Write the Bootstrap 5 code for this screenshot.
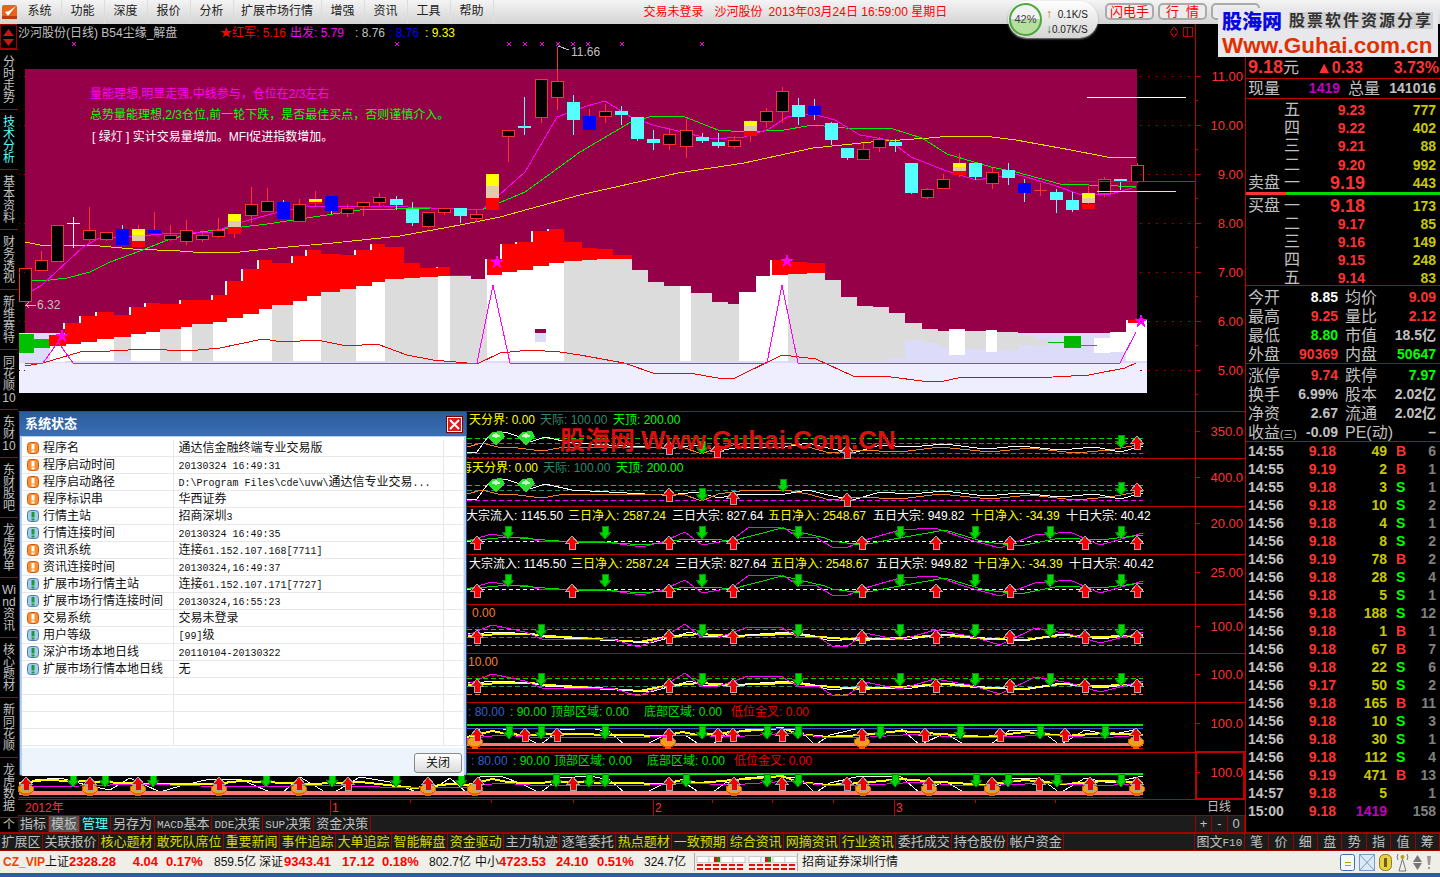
<!DOCTYPE html>
<html lang="zh-CN">
<head>
  <meta charset="UTF-8">
  <meta name="viewport" content="width=device-width, initial-scale=1">
  <title>招商证券深圳行情</title>
  <link href="https://cdn.jsdelivr.net/npm/bootstrap@5.3.0/dist/css/bootstrap.min.css" rel="stylesheet">
  <style>
    html, body { margin: 0; height: 877px; overflow: hidden; background: #000; }
    body { font: 12px/1.2 "Liberation Sans", "Noto Sans CJK SC", sans-serif; color: #c0c0c0; }
    .app { position: relative; width: 1440px; height: 877px; }

    /* top menu */
    .top-bar { height: 24px; background: linear-gradient(#f4f4f4, #d4d4d4); color: #222; }
    .top-logo { width: 18.5px; padding-left: 2px; }
    .menu-item { width: 43px; text-align: center; line-height: 23px; border-right: 1px solid #ddd; }
    .menu-long { width: 88px; }
    .top-status { margin-left: 150px; color: #f00; white-space: nowrap; }
    .top-status span { margin-right: 11px; }
    .top-status span + span { margin-right: 6px; }
    .top-btns { margin-left: auto; width: 335px; padding-top: 3px; }
    .top-btn { height: 17px; width: 49px; padding: 0; font-size: 13px; line-height: 13px; color: #f00; background: #ececec; border: 2px solid #aaa; border-radius: 5px; white-space: pre; }
    .top-btn:hover { color: #f00; background: #ececec; border-color: #aaa; }
    .speed-pill { position: absolute; left: 1008px; top: 1px; width: 90px; height: 37px; border-radius: 19px; background: linear-gradient(#fff, #d4d4d4); z-index: 5; box-shadow: 0 1px 2px #888; color: #222; font-size: 10px; }
    .speed-ring { position: absolute; left: 1px; top: 2px; width: 33px; height: 33px; border-radius: 50%; border: 2px solid #4da83a; background: linear-gradient(#f2f2f2 50%, #b6de9c 50%); text-align: center; line-height: 29px; color: #444; font-size: 11px; }
    .speed-up, .speed-down { position: absolute; left: 38px; white-space: nowrap; }
    .speed-up { top: 6px; }
    .speed-down { top: 21px; }
    .arrow-up { color: #e06000; font-weight: bold; font-size: 12px; margin-right: 3px; }
    .arrow-down { color: #087808; font-weight: bold; font-size: 12px; margin-right: 0; }
    .ad-banner { position: absolute; left: 1218px; top: 8px; width: 220px; height: 49px; background: #e8e8ec; z-index: 6; padding: 2px 4px 0; }
    .ad-name { font-size: 20px; line-height: 24px; font-weight: 900; color: #0808e0; width: 67px; }
    .ad-slogan { font-size: 16px; line-height: 17px; height: 17px; margin-top: 2px; letter-spacing: 2px; font-weight: 700; background: #d2d2d2; color: #333; white-space: nowrap; }
    .ad-url { font-size: 22.5px; line-height: 23px; font-weight: 700; color: #e03000; white-space: nowrap; }

    /* main frame */
    .mid-row { height: 808px; }
    .side-col { width: 18px; overflow: hidden; background: #000; text-align: center; font-size: 12px; line-height: 12px; }
    .side-step { height: 26px; border: 1px solid #a00000; padding: 2px 0 0; margin-right: 1px; }
    .side-tab { border-top: 1px solid #b00000; padding-top: 6px; color: #c0c0c0; flex: none; }
    .side-tab:last-child { padding-top: 1px; }
    .side-on { color: #54ffff; }
    .chart-col { width: 1227px; }
    .chart-cv { display: block; shape-rendering: crispEdges; }
    .chart-cv text { font-size: 12px; }
    .chart-cv .ax { font-size: 13px; fill: #ff3232; text-anchor: end; }
    .chart-cv .mark { font-size: 26px; font-weight: 700; fill: #dc1010; }
    .dark-tabs { height: 17px; background: #1c1c1c; border-top: 1px solid #a00000; font-size: 13px; line-height: 15px; }
    .dark-item { border-right: 1px solid #a00000; padding: 0 2px; color: #c0c0c0; white-space: nowrap; }
    .dark-active { background: #555; }
    .dark-cyan { color: #54ffff; }
    .latin-narrow { font: 11px "Liberation Mono", monospace; }
    .plus-box { margin-left: auto; width: 50px; height: 16px; display: grid; grid-template-columns: 16px 16px 1fr; text-align: center; border-left: 1px solid #a00000; }
    .plus-box > div { border-right: 1px solid #a00000; }

    /* quote column */
    .quote-col { width: 195px; border-left: 1px solid #c00000; background: #000; font-weight: 700; font-size: 14px; }
    .q-top { height: 33px; flex: none; }
    .q-price { height: 22px; display: grid; grid-template-columns: 68px 1fr auto; padding: 0 1px 0 2px; color: #ff3232; border-bottom: 1px solid #c00000; font-size: 16px; line-height: 21px; }
    .q-big { font-size: 18px; }
    .q-cjk { font-weight: 400; font-size: 16px; color: #c0c0c0; }
    .q-paren { font-size: 10px; }
    .q-vol { height: 20px; display: grid; grid-template-columns: 34px 58px 8px 34px 1fr; padding: 0 4px 0 2px; border-bottom: 1px solid #c00000; line-height: 19px; }
    .q-book { padding: 2px 4px 0 2px; }
    .q-line { display: grid; grid-template-columns: 36px 16px 65px 1fr; height: 18.2px; line-height: 18px; }
    .q-buy .q-line { height: 18px; }
    .q-qty { text-align: right; color: #c8c800; }
    .q-px { text-align: right; color: #ff3232; }
    .q-px-big { font-size: 18px; }
    .q-bar { height: 3px; background: #00dc00; flex: none; }
    .q-bar-fill { height: 3px; background: #ff3232; }
    .q-buy { height: 91px; border-bottom: 1px solid #c00000; flex: none; }
    .q-stats { padding: 2px 4px 0 2px; border-bottom: 1px solid #c00000; height: 78px; flex: none; }
    .q-stat { display: grid; grid-template-columns: 34px 56px 41px 1fr; height: 19px; line-height: 19px; white-space: nowrap; }
    .q-stat > :nth-child(3) { padding-left: 7px; }
    .q-val { text-align: right; }
    .c-red { color: #ff3232; }
    .c-white { color: #fff; }
    .c-green { color: #00ff00; }
    .c-silver { color: #c0c0c0; }
    .c-purple { color: #c000c0; }
    .c-count { color: #808080; }
    .q-ticks { padding: 1px 4px 0 2px; }
    .q-tick { display: grid; grid-template-columns: 40px 48px 51px 20px 1fr; height: 18px; line-height: 17px; }
    .q-side { padding-left: 9px; }

    /* second tab row */
    .tab-row { height: 19px; background: #1c1c1c; border-top: 2px solid #a00000; font-size: 13px; line-height: 16px; border-bottom: 1px solid #a00000; }
    .tab-item { border-right: 1px solid #a00000; padding: 0 1.5px; white-space: nowrap; color: #c0c0c0; }
    .tab-yel { color: #d8d800; }
    .tab-f10 { margin-left: auto; width: 51px; border-left: 1px solid #a00000; text-align: center; }
    .tab-pick { width: 24.4px; text-align: center; padding: 0; }

    /* status */
    .status-bar { height: 22px; background: #efefe8; display: grid; grid-template-columns: 42px 24px 61px 36px 48px 45px 25px 58px 40px 47px 46px 24px 57px 41px 47px 50px 108px 1fr auto; align-items: center; padding-left: 3px; color: #111; font-size: 12px; white-space: nowrap; }
    .st-b { font-weight: 700; color: #f00; font-size: 13px; }
    .st-vip { font-weight: 700; color: #f04000; font-size: 12px; }
    .st-mini { height: 18px; border-left: 1px solid #aaa; border-right: 1px solid #aaa; width: 104px; }
    .st-icons { padding-right: 8px; }
    .st-icons svg { display: block; }
    .task-edge { height: 4px; background: #2d5d9e; }

    /* dialog */
    .dlg-box { position: absolute; left: 19px; top: 411px; width: 448px; height: 365px; background: #b5d0ee; border: 1px solid #1f4f90; border-radius: 2px; z-index: 4; color: #111; }
    .dlg-head { height: 24px; padding: 0 3px 0 5px; background: linear-gradient(#2a5b9c, #3b70b5); border: 0; border-radius: 0; color: #fff; font-weight: 700; font-size: 13px; line-height: 24px; }
    .dlg-x { width: 17px; height: 17px; background: #e01818; border: 1px solid #7a0000; outline: 1px solid #fff; outline-offset: -2px; display: flex; align-items: center; justify-content: center; margin-top: 4px; }
    .dlg-body { margin: 1px 2px 0; height: 311px; background: #fff; padding: 3px 0 0; overflow: hidden; }
    .dlg-table { table-layout: fixed; width: 442px; margin: 0; font-size: 12px; }
    .dlg-table > tbody > tr > td { padding: 0 0 0 5px; border-bottom: 1px solid #e8e8e8; border-right: 1px solid #e8e8e8; color: #111; }
    .dlg-cell { display: block; height: 16px; line-height: 16px; white-space: nowrap; overflow: hidden; }
    .dlg-ico { vertical-align: -2px; margin-right: 4px; }
    .dlg-mono { font: 10px/16px "Liberation Mono", monospace; }
    .dlg-foot { height: 28px; padding: 5px 2px 0 0; background: #eef4fb; margin: 0 2px; text-align: right; }
    .dlg-close { width: 48px; height: 20px; padding: 0; font-size: 12px; line-height: 16px; color: #111; background: linear-gradient(#fff, #dcdcdc); border: 1px solid #888; border-radius: 3px; }
  </style>
</head>
<body>
<div class="app">

  <div class="top-bar d-flex">
    <div class="top-logo pt-1">
      <svg width="16" height="16" viewBox="0 0 16 16"><rect x="0" y="1" width="15" height="14" rx="2" fill="#e8641a"/><path d="M3 8l3 4 8-10-7 5z" fill="#fff"/><path d="M0 12h15v3H0z" fill="#b83c0c"/></svg>
    </div>
    <div class="menu-item">系统</div>
    <div class="menu-item">功能</div>
    <div class="menu-item">深度</div>
    <div class="menu-item">报价</div>
    <div class="menu-item">分析</div>
    <div class="menu-item menu-long">扩展市场行情</div>
    <div class="menu-item">增强</div>
    <div class="menu-item">资讯</div>
    <div class="menu-item">工具</div>
    <div class="menu-item">帮助</div>
    <div class="top-status lh-lg"><span>交易未登录</span><span>沙河股份</span><span>2013年03月24日 16:59:00 星期日</span></div>
    <div class="top-btns d-flex gap-1">
      <button class="btn top-btn">闪电手</button>
      <button class="btn top-btn">行  情</button>
      <button class="btn top-btn"></button>
    </div>
  </div>

  <div class="speed-pill">
    <div class="speed-ring">42%</div>
    <div class="speed-up"><span class="arrow-up">↑</span>&nbsp;0.1K/S</div>
    <div class="speed-down"><span class="arrow-down">↓</span>0.07K/S</div>
  </div>

  <div class="ad-banner">
    <div class="d-flex">
      <div class="ad-name">股海网</div>
      <div class="ad-slogan">股票软件资源分享</div>
    </div>
    <div class="ad-url">Www.Guhai.com.cn</div>
  </div>

  <div class="mid-row d-flex">
    <div class="side-col d-flex flex-column" id="sideCol">
      <div class="side-step">
        <svg width="15" height="21" viewBox="0 0 15 21"><path d="M7.5 2L13 9H2z" fill="#c01818"/><path d="M2 12h11l-5.5 7z" fill="#c01818"/></svg>
      </div>
    </div>
    <div class="chart-col d-flex flex-column">
      <svg class="chart-cv" id="chart" width="1227" height="791" viewBox="18 24 1227 791"></svg>
      <div class="dark-tabs d-flex">
        <div class="dark-item">指标</div>
        <div class="dark-item dark-active">模板</div>
        <div class="dark-item dark-cyan">管理</div>
        <div class="dark-item">另存为</div>
        <div class="dark-item"><span class="latin-narrow">MACD</span>基本</div>
        <div class="dark-item"><span class="latin-narrow">DDE</span>决策</div>
        <div class="dark-item"><span class="latin-narrow">SUP</span>决策</div>
        <div class="dark-item">资金决策</div>
        <div class="plus-box"><div>+</div><div>-</div><div>0</div></div>
      </div>
    </div>
    <div class="quote-col d-flex flex-column">
      <div class="q-top"></div>
      <div class="q-price"><div><span class="q-big">9.18</span><span class="q-cjk">元</span></div><div>▲0.33</div><div>3.73%</div></div>
      <div class="q-vol"><span class="q-cjk">现量</span><span class="q-val c-purple">1419</span><span></span><span class="q-cjk">总量</span><span class="q-val c-silver">141016</span></div>
      <div class="q-book" id="bookSell"></div>
      <div class="q-bar"><div class="q-bar-fill" id="bookBar"></div></div>
      <div class="q-book q-buy" id="bookBuy"></div>
      <div class="q-stats" id="stats1"></div>
      <div class="q-stats" id="stats2"></div>
      <div class="q-ticks" id="ticks"></div>
    </div>
  </div>

  <div class="tab-row d-flex" id="tabRow"></div>

  <div class="status-bar">
    <span class="st-vip">CZ_VIP</span><span>上证</span><span class="st-b">2328.28</span><span class="st-b text-end pe-2">4.04</span><span class="st-b">0.17%</span><span>859.5亿</span>
    <span>深证</span><span class="st-b">9343.41</span><span class="st-b">17.12</span><span class="st-b">0.18%</span><span>802.7亿</span>
    <span>中小</span><span class="st-b">4723.53</span><span class="st-b">24.10</span><span class="st-b">0.51%</span><span>324.7亿</span>
    <div class="st-mini" id="stMini"></div>
    <span>招商证券深圳行情</span>
    <div class="st-icons d-flex gap-1 align-items-center">
      <svg width="15" height="17" viewBox="0 0 15 17"><rect x="0.5" y="0.5" width="14" height="16" rx="2" fill="#f4f8ff" stroke="#3b6fb5"/><rect x="5" y="8" width="6" height="1" fill="#c8a000"/><rect x="5" y="11" width="6" height="1" fill="#c8a000"/></svg>
      <svg width="16" height="17" viewBox="0 0 16 17"><rect x="0.5" y="0.5" width="15" height="16" fill="#dbe9f8" stroke="#7a9cc8"/><path d="M1 1l14 15M15 1L1 16" stroke="#7a9cc8" fill="none"/></svg>
      <svg width="13" height="17" viewBox="0 0 13 17"><rect x="0.5" y="0.5" width="12" height="16" rx="5" fill="#e8d040" stroke="#8a7a20"/><rect x="5" y="4" width="3" height="9" fill="#6a6020"/></svg>
      <svg width="13" height="19" viewBox="0 0 13 19"><path d="M6.5 6L3 18h7z" fill="none" stroke="#777"/><circle cx="6.5" cy="4" r="2" fill="#b8a020"/><path d="M2 1a6 6 0 0 0 0 6M11 1a6 6 0 0 1 0 6" fill="none" stroke="#777"/></svg>
      <svg width="9" height="17" viewBox="0 0 9 17"><path d="M4.5 1L9 8H0zM4.5 16L0 9h9z" fill="#777"/></svg>
      <svg width="6" height="15" viewBox="0 0 6 15"><path d="M1 1h4L4 10H2zM2 12h2v2H2z" fill="#999"/></svg>
    </div>
  </div>
  <div class="task-edge"></div>

  <div class="dlg-box">
    <div class="dlg-head card-header d-flex justify-content-between">
      <span>系统状态</span>
      <span class="dlg-x"><svg width="11" height="11" viewBox="0 0 11 11"><path d="M1 1l9 9M10 1l-9 9" stroke="#fff" stroke-width="2" fill="none"/></svg></span>
    </div>
    <div class="dlg-body">
      <table class="table dlg-table">
        <colgroup><col style="width:151px"><col style="width:270px"><col></colgroup>
        <tbody id="dlgRows"></tbody>
      </table>
    </div>
    <div class="dlg-foot"><button class="btn dlg-close">关闭</button></div>
  </div>
</div>

<svg width="0" height="0" class="position-absolute">
  <symbol id="icoWarn" viewBox="0 0 12 12"><rect x="0.5" y="0.5" width="11" height="11" rx="3" fill="#f89030" stroke="#d85810"/><rect x="4.5" y="2" width="3" height="5.5" fill="#fff"/><rect x="4.5" y="8.5" width="3" height="2" fill="#fff"/></symbol>
  <symbol id="icoInfo" viewBox="0 0 12 12"><rect x="0.5" y="0.5" width="11" height="11" rx="3" fill="#a8cce8" stroke="#4878c0"/><rect x="4.5" y="2" width="3" height="5.5" fill="#189838"/><rect x="4.5" y="8.5" width="3" height="2" fill="#189838"/></symbol>
</svg>

<script src="https://cdn.jsdelivr.net/npm/bootstrap@5.3.0/dist/js/bootstrap.bundle.min.js"></script>
<script>
  // left tabs
  const sideTabs = ['分 时 走 势', '技 术 分 析', '基 本 资 料', '财 务 透 视', '新 维 赛 特', '同 花 顺 10', '东 财 10', '东 财 股 吧', '龙 虎 榜 单', 'Wi nd 资 讯', '核 心 题 材', '新 同 花 顺', '龙 虎 数 据', '个'];
  const sideCol = document.getElementById('sideCol');
  sideTabs.forEach((t, i) => {
    const el = document.createElement('div');
    el.className = 'side-tab' + (i === 1 ? ' side-on' : '');
    el.innerHTML = t.split(' ').join('<br>');
    sideCol.appendChild(el);
  });
  sideCol.querySelectorAll('.side-tab').forEach((el, i) => { el.style.height = (sideTabs[i].split(' ').length * 12 + 12) + 'px'; });

  // quote column
  const bookRow = (lab, num, px, qty, big) => `<div class="q-line"><span class="q-cjk">${lab}</span><span class="q-cjk">${num}</span><span class="q-px ${big ? 'q-px-big' : ''}">${px}</span><span class="q-qty">${qty}</span></div>`;
  document.getElementById('bookSell').innerHTML = [['', '五', '9.23', 777], ['', '四', '9.22', 402], ['', '三', '9.21', 88], ['', '二', '9.20', 992], ['卖盘', '一', '9.19', 443, 1]].map(r => bookRow(...r)).join('');
  document.getElementById('bookBuy').innerHTML = [['买盘', '一', '9.18', 173, 1], ['', '二', '9.17', 85], ['', '三', '9.16', 149], ['', '四', '9.15', 248], ['', '五', '9.14', 83]].map(r => bookRow(...r)).join('');
  document.getElementById('bookBar').style.width = '40px';

  const statRow = (a, av, ac, b, bv, bc) => `<div class="q-stat"><span class="q-cjk">${a}</span><span class="q-val ${ac}">${av}</span><span class="q-cjk">${b}</span><span class="q-val ${bc}">${bv}</span></div>`;
  document.getElementById('stats1').innerHTML = [
    ['今开', '8.85', 'c-white', '均价', '9.09', 'c-red'], ['最高', '9.25', 'c-red', '量比', '2.12', 'c-red'],
    ['最低', '8.80', 'c-green', '市值', '18.5亿', 'c-silver'], ['外盘', '90369', 'c-red', '内盘', '50647', 'c-green']
  ].map(r => statRow(...r)).join('');
  document.getElementById('stats2').innerHTML = [
    ['涨停', '9.74', 'c-red', '跌停', '7.97', 'c-green'], ['换手', '6.99%', 'c-silver', '股本', '2.02亿', 'c-silver'],
    ['净资', '2.67', 'c-silver', '流通', '2.02亿', 'c-silver'], ['收益<span class="q-paren">(三)</span>', '-0.09', 'c-silver', 'PE(动)', '–', 'c-silver']
  ].map(r => statRow(...r)).join('');

  const ticks = [['14:55', '9.18', 49, 'B', 6], ['14:55', '9.19', 2, 'B', 1], ['14:55', '9.18', 3, 'S', 1], ['14:56', '9.18', 10, 'S', 2], ['14:56', '9.18', 4, 'S', 1], ['14:56', '9.18', 8, 'S', 2], ['14:56', '9.19', 78, 'B', 2], ['14:56', '9.18', 28, 'S', 4], ['14:56', '9.18', 5, 'S', 1], ['14:56', '9.18', 188, 'S', 12], ['14:56', '9.18', 1, 'B', 1], ['14:56', '9.18', 67, 'B', 7], ['14:56', '9.18', 22, 'S', 6], ['14:56', '9.17', 50, 'S', 2], ['14:56', '9.18', 165, 'B', 11], ['14:56', '9.18', 10, 'S', 3], ['14:56', '9.18', 30, 'S', 1], ['14:56', '9.18', 112, 'S', 4], ['14:56', '9.19', 471, 'B', 13], ['14:57', '9.18', 5, '', 1], ['15:00', '9.18', 1419, '', 158]];
  document.getElementById('ticks').innerHTML = ticks.map(t => `<div class="q-tick"><span class="c-silver">${t[0]}</span><span class="q-px">${t[1]}</span><span class="q-qty ${t[2] === 1419 ? 'c-purple' : ''}">${t[2]}</span><span class="q-side ${t[3] === 'B' ? 'c-red' : 'c-green'}">${t[3]}</span><span class="q-val c-count">${t[4]}</span></div>`).join('');

  // lower tab row
  const tabRow = document.getElementById('tabRow');
  const lowerTabs = [['扩展区'], ['关联报价'], ['核心题材', 1], ['敢死队席位', 1], ['重要新闻', 1], ['事件追踪', 1], ['大单追踪', 1], ['智能解盘', 1], ['资金驱动', 1], ['主力轨迹'], ['逐笔委托'], ['热点题材', 1], ['一致预期', 1], ['综合资讯', 1], ['网摘资讯', 1], ['行业资讯', 1], ['委托成交'], ['持仓股份'], ['帐户资金']];
  tabRow.innerHTML = lowerTabs.map(t => `<div class="tab-item ${t[1] ? 'tab-yel' : ''}">${t[0]}</div>`).join('')
    + '<div class="tab-item tab-f10">图文<span class="latin-narrow">F10</span></div>'
    + ['笔', '价', '细', '盘', '势', '指', '值', '筹'].map((t, i) => `<div class="tab-item tab-pick ${i === 0 ? 'dark-cyan' : ''}">${t}</div>`).join('');

  // status mini bars
  let mini = '<svg width="104" height="18" viewBox="0 0 104 18">';
  [2, 54].forEach(x0 => {
    for (let i = 0; i < 4; i++) mini += `<rect x="${x0 + i * 12}" y="3.5" width="12" height="6" fill="#fff" stroke="#ccc"/>`;
    for (let i = 0; i < 6; i++) {
      mini += `<rect x="${x0 + i * 8}" y="11" width="6" height="2" fill="#e01010"/><rect x="${x0 + i * 8}" y="15" width="6" height="2" fill="#e01010"/>`;
    }
  });
  mini += '<rect x="19" y="4" width="3" height="5" fill="#e01010"/><rect x="22" y="4" width="3" height="5" fill="#109010"/><rect x="70" y="4" width="3" height="5" fill="#e01010"/><rect x="73" y="4" width="3" height="5" fill="#109010"/></svg>';
  document.getElementById('stMini').innerHTML = mini;

  // dialog rows
  const m = s => `<span class="dlg-mono">${s}</span>`;
  const dlgRows = [
    ['w', '程序名', '通达信金融终端专业交易版'],
    ['w', '程序启动时间', m('20130324 16:49:31')],
    ['w', '程序启动路径', m('D:\\Program Files\\cde\\uvw\\') + '通达信专业交易' + m('...')],
    ['w', '程序标识串', '华西证券'],
    ['i', '行情主站', '招商深圳' + m('3')],
    ['i', '行情连接时间', m('20130324 16:49:35')],
    ['w', '资讯系统', '连接' + m('61.152.107.168[7711]')],
    ['w', '资讯连接时间', m('20130324,16:49:37')],
    ['i', '扩展市场行情主站', '连接' + m('61.152.107.171[7727]')],
    ['i', '扩展市场行情连接时间', m('20130324,16:55:23')],
    ['w', '交易系统', '交易未登录'],
    ['i', '用户等级', m('[99]') + '级'],
    ['i', '深沪市场本地日线', m('20110104-20130322')],
    ['i', '扩展市场行情本地日线', '无'],
    [], [], [], []
  ];
  document.getElementById('dlgRows').innerHTML = dlgRows.map(r => `<tr><td><div class="dlg-cell">${r[0] ? `<svg class="dlg-ico" width="12" height="12"><use href="#ico${r[0] === 'w' ? 'Warn' : 'Info'}"/></svg>${r[1]}` : ''}</div></td><td><div class="dlg-cell">${r[2] || ''}</div></td><td><div class="dlg-cell"></div></td></tr>`).join('');

  // ---------- chart canvas ----------
  const out = [];
  const RED = '#ff3232', LINE = '#c00000';
  const R = (x, y, w, h, f) => out.push(`<rect x="${x}" y="${y}" width="${w}" height="${h}" fill="${f}"/>`);
  const L = (pts, c, w = 1, dash = '') => {
    let s = '';
    for (let i = 0; i < pts.length; i += 2) s += pts[i] + ',' + pts[i + 1] + ' ';
    out.push(`<polyline points="${s}" fill="none" stroke="${c}" stroke-width="${w}" ${dash ? `stroke-dasharray="${dash}"` : ''}/>`);
  };
  const T = (x, y, s, c, cls = '') => out.push(`<text x="${x}" y="${y}" fill="${c}" class="${cls}">${s}</text>`);
  const shift = (a, dy) => a.map((v, i) => i % 2 ? v + dy : v);
  const star = (x, y) => {
    let p = '';
    for (let i = 0; i < 10; i++) {
      const r = i % 2 ? 3 : 8, a = -Math.PI / 2 + i * Math.PI / 5;
      p += (x + r * Math.cos(a)).toFixed(1) + ',' + (y + r * Math.sin(a)).toFixed(1) + ' ';
    }
    out.push(`<polygon points="${p}" fill="#ff00ff"/>`);
  };
  const up = (x, y) => out.push(`<polygon points="${x},${y - 7} ${x + 6},${y} ${x + 3},${y} ${x + 3},${y + 6} ${x - 3},${y + 6} ${x - 3},${y} ${x - 6},${y}" fill="#f00000" stroke="#a8a8a8"/>`);
  const down = (x, y) => out.push(`<polygon points="${x},${y + 7} ${x + 6},${y} ${x + 3},${y} ${x + 3},${y - 6} ${x - 3},${y - 6} ${x - 3},${y} ${x - 6},${y}" fill="#00d800" stroke="#009000"/>`);
  const gem = (x, y) => out.push(`<polygon points="${x - 9},${y - 1} ${x - 4},${y - 6} ${x + 6},${y - 7} ${x + 9},${y - 1} ${x},${y + 7}" fill="#30e030"/><polygon points="${x - 5},${y - 2} ${x},${y - 5} ${x + 5},${y - 2} ${x},${y}" fill="#c8ffc8"/>`);
  const flame = (x, y) => out.push(`<ellipse cx="${x}" cy="${y}" rx="8" ry="5" fill="#f0a020" stroke="#d86000"/><rect x="${x - 3}" y="${y + 4}" width="6" height="3" fill="#f06000"/>`);

  // main pane background
  R(25, 69, 1112, 264, '#960048');
  R(19, 333, 1128, 30, '#dcdcfa');
  R(19, 363, 1128, 30, '#eeeeff');

  // volume style steps: x0, x1, redTop, fillTop, fill, bottom
  const W = '#ffffff', G = '#dcdcdc';
  const bands = [
    [65, 81, 323, 344, W], [81, 97, 316, 342, W], [97, 114, 312, 339, W], [114, 131, 315, 337, G, 356], [131, 146, 307, 334, W], [146, 160, 303, 332, W],
    [160, 181, 304, 329, G], [181, 192, 300, 327, W], [192, 213, 300, 324, G], [213, 227, 295, 322, W], [227, 243, 281, 318, W], [243, 259, 269, 314, W],
    [259, 272, 260, 309, W], [272, 293, 263, 305, G], [293, 307, 256, 301, W], [307, 321, 250, 296, W], [321, 340, 254, 292, G], [340, 356, 255, 289, G],
    [356, 372, 250, 286, W], [372, 385, 244, 282, W], [385, 404, 247, 279, G], [404, 420, 263, 278, G], [420, 438, 268, 277, G], [438, 450, 267, 276, W],
    [450, 471, 275, 276, G], [471, 487, 279, 279, G], [487, 502, 259, 275, W], [502, 517, 244, 272, W], [517, 533, 242, 270, W], [533, 549, 231, 266, W],
    [549, 564, 229, 263, W], [564, 582, 242, 261, G], [582, 597, 248, 260, G], [597, 613, 249, 259, G], [613, 632, 255, 259, G],
    [632, 648, 270, 270, G], [648, 664, 282, 282, G], [664, 680, 286, 286, G], [680, 691, 286, 286, W], [691, 712, 293, 293, G], [712, 728, 302, 302, G],
    [728, 739, 304, 304, G], [739, 756, 292, 292, W], [756, 772, 276, 276, W], [772, 788, 260, 275, W], [788, 807, 262, 274, G], [807, 825, 263, 273, G],
    [825, 841, 280, 280, G], [841, 857, 297, 297, G], [857, 873, 306, 306, G], [873, 889, 307, 307, G], [889, 905, 313, 313, G, 358],
    [905, 922, 323, 323, G, 340], [922, 938, 329, 329, G, 343], [938, 949, 331, 331, G, 347], [949, 965, 329, 329, W, 355], [965, 986, 331, 331, G, 349],
    [986, 997, 330, 330, W, 352], [997, 1018, 332, 332, G, 350], [1018, 1034, 336, 336, G, 345], [1034, 1050, 339, 339, G, 346], [1094, 1110, 338, 338, W, 353],
    [1110, 1126, 332, 332, W, 352], [1126, 1147, 320, 320, W, 361]
  ];
  bands.forEach((b, i) => {
    const bottom = b[5] || 361;
    R(b[0], b[3], b[1] - b[0], bottom - b[3], b[4]);
    if (b[2] < b[3]) {
      R(b[0], b[2], b[1] - b[0], b[3] - b[2], '#ff0000');
      // white notch where the band steps up
      const prev = i ? bands[i - 1][2] : b[2] + 6;
      if (prev > b[2]) R(b[0] - 2, b[2], 2, prev - b[2], W);
    }
  });
  R(1128, 320, 12, 3, '#ff0000');
  R(535, 329, 11, 4, '#960048');
  R(535, 333, 11, 9, '#dcdcfa');
  R(19, 334, 15, 19, '#00c000');
  R(34, 339, 16, 9, '#00c000');
  R(50, 346, 15, 16, W);
  R(49, 335, 17, 11, '#ff0000');
  R(1064, 336, 17, 12, '#00b800');
  R(1048, 342, 16, 1, '#00b800');
  R(1081, 345, 16, 1, '#00b800');

  // moving averages
  L([25, 242, 40, 245, 80, 245, 100, 246, 133, 249, 180, 251, 193, 252, 240, 252, 277, 248, 333, 243, 400, 236, 460, 225, 500, 217, 580, 195, 678, 173, 744, 163, 813, 148, 871, 142, 929, 138, 951, 136, 984, 136, 1016, 140, 1071, 150, 1107, 157, 1136, 158], '#e8e000');
  L([32, 281, 50, 280, 67, 278, 90, 272, 110, 262, 140, 251, 170, 239, 200, 232, 267, 224, 360, 210, 431, 208, 482, 210, 525, 192, 580, 152, 631, 122, 653, 116, 685, 117, 718, 130, 744, 132, 784, 130, 813, 125, 845, 128, 893, 129, 922, 138, 947, 154, 991, 167, 1016, 172, 1060, 184, 1118, 186, 1136, 187], '#00f000');
  L([25, 297, 32, 291, 42, 285, 83, 247, 98, 239, 129, 237, 162, 234, 180, 233, 213, 232, 242, 222, 275, 213, 307, 206, 344, 207, 384, 206, 431, 208, 482, 210, 525, 172, 557, 117, 587, 106, 605, 101, 631, 117, 653, 125, 678, 131, 711, 139, 744, 137, 769, 129, 787, 117, 813, 114, 835, 120, 860, 135, 889, 140, 911, 157, 944, 170, 976, 180, 1016, 174, 1053, 185, 1082, 195, 1111, 194, 1136, 187], '#ff00ff');

  // candles
  const candles = [
    ['u', 268, 301, 268, 301], ['u', 260, 270, 251, 271], ['u', 225, 261, 225, 261], ['c', 223, 223, 217, 248], ['u', 230, 239, 207, 242], ['u', 232, 239, 232, 241], ['b', 229, 245, 225, 245], ['s', 229, 247, 225, 247],
    ['B', 230, 233, 212, 233], ['u', 235, 239, 225, 241], ['u', 230, 241, 220, 245], ['u', 235, 239, 230, 242], ['u', 230, 236, 218, 238], ['s', 214, 234, 214, 238], ['u', 204, 215, 187, 223], ['u', 201, 211, 188, 212],
    ['b', 202, 219, 200, 219], ['u', 204, 221, 199, 221], ['s', 199, 204, 191, 207], ['b', 196, 211, 196, 214], ['u', 208, 213, 204, 217], ['u', 202, 206, 202, 216], ['u', 197, 202, 193, 206], ['d', 199, 205, 196, 210],
    ['d', 209, 223, 202, 226], ['u', 212, 226, 212, 228], ['u', 208, 212, 208, 215], ['d', 208, 216, 208, 223], ['u', 214, 218, 209, 222], ['s', 174, 210, 174, 210], ['u', 130, 136, 130, 162], ['d', 126, 128, 97, 135],
    ['u', 79, 117, 79, 123], ['u', 81, 97, 47, 110], ['d', 102, 120, 95, 135], ['B', 116, 130, 109, 130], ['u', 111, 116, 104, 123], ['d', 111, 115, 106, 125], ['d', 117, 139, 117, 141], ['d', 139, 143, 130, 150],
    ['u', 134, 144, 128, 150], ['u', 130, 146, 119, 158], ['d', 137, 141, 133, 143], ['d', 142, 146, 133, 148], ['u', 140, 146, 136, 149], ['s', 121, 136, 120, 142], ['u', 111, 121, 108, 128], ['u', 91, 111, 87, 123],
    ['d', 105, 117, 98, 125], ['b', 106, 115, 99, 120], ['d', 123, 140, 122, 145], ['d', 148, 158, 148, 160], ['u', 149, 159, 143, 159], ['u', 139, 147, 137, 152], ['d', 142, 146, 139, 152], ['d', 163, 193, 163, 194],
    ['u', 189, 197, 188, 199], ['u', 179, 188, 174, 188], ['s', 163, 175, 153, 177], ['d', 163, 177, 163, 180], ['u', 172, 183, 168, 189], ['d', 170, 178, 163, 185], ['b', 183, 193, 179, 202], ['r', 190, 190, 183, 196],
    ['d', 192, 200, 189, 213], ['d', 200, 210, 192, 212], ['s', 193, 209, 186, 209], ['u', 179, 193, 177, 197], ['d', 179, 181, 179, 190], ['u', 165, 181, 163, 183]
  ];
  candles.forEach((c, i) => {
    const x = Math.round(25 + 16.11 * i), [t, top, bot, hi, lo] = c;
    const wick = { u: RED, B: RED, s: RED, r: RED, d: '#54ffff', b: '#54ffff', c: '#ffffff' }[t];
    R(x, hi, 1, lo - hi, wick);
    if (t === 'c' || t === 'r') { R(x - 6, top, 13, 1, wick); return; }
    if (t === 'u') out.push(`<rect x="${x - 6}" y="${top}" width="12" height="${bot - top}" fill="#000" stroke="${RED}"/>`);
    else if (t === 'd') R(x - 6, top, 13, bot - top, '#54ffff');
    else if (t === 'b' || t === 'B') R(x - 6, top, 13, bot - top, '#0000ff');
    else {
      const h = (bot - top) / 3;
      R(x - 6, top, 13, Math.round(h), '#ffff00');
      R(x - 6, top + Math.round(h), 13, Math.round(h), '#e0ccA8');
      R(x - 6, top + Math.round(h * 2), 13, bot - top - Math.round(h * 2), '#ff0000');
    }
  });

  // lower lines of main pane
  L([25, 366, 43, 363, 80, 352, 110, 351, 147, 349, 187, 351, 220, 348, 263, 339, 283, 342, 317, 340, 347, 346, 377, 344, 407, 355, 433, 360, 467, 363, 477, 364, 500, 353, 530, 350, 560, 352, 580, 355, 624, 363, 653, 373, 689, 373, 718, 378, 735, 378, 782, 355, 816, 359, 853, 376, 891, 377, 922, 381, 944, 381, 958, 378, 1053, 377, 1089, 375, 1125, 368, 1136, 363], '#f00000');
  L([25, 363, 43, 363, 58, 342, 73, 363, 477, 363, 493, 285, 510, 363, 767, 363, 782, 285, 798, 363, 1120, 363, 1136, 332], '#ff00ff');
  star(62, 336); star(497, 262); star(787, 261); star(1141, 321);

  // price axis
  R(1195, 24, 1, 775, LINE);
  [['11.00', 76], ['10.00', 125], ['9.00', 174], ['8.00', 223], ['7.00', 272], ['6.00', 321], ['5.00', 370]].forEach(a => {
    T(1243, a[1] + 5, a[0], RED, 'ax');
    R(1195, a[1], 6, 1, LINE);
    R(1195, a[1] + 24, 3, 1, LINE);
    L([1140, a[1] + 0.5, 1195, a[1] + 0.5], '#a00000', 1, '2 6');
    L([19, a[1] + 0.5, 25, a[1] + 0.5], '#a00000', 1, '1 4');
  });
  R(1087, 97, 99, 1, '#ffffff');
  R(1068, 181, 127, 1, '#e01010');
  R(1097, 191, 79, 1, '#ffff00');

  // header line of the main pane
  T(18, 37, '沙河股份(日线) B54尘缘_解盘', '#c0c0c0');
  T(220, 37, '★红军: 5.16', '#ff0000');
  T(290, 37, '出发: 5.79', '#ff00ff');
  T(355, 37, ': 8.76', '#c0c0c0');
  T(389, 37, ': 8.76', '#0000ff');
  T(425, 37, ': 9.33', '#ffff00');
  out.push(`<polygon points="1174,27 1178,32 1174,37 1170,32" fill="none" stroke="${LINE}"/>`);
  out.push(`<rect x="1183" y="27.5" width="9" height="9" fill="none" stroke="${LINE}"/><rect x="1187" y="27.5" width="1" height="9" fill="${LINE}"/>`);
  [74, 397, 509, 525, 542, 558, 573, 588, 622, 702].forEach(x => {
    R(x - 2, 42, 1, 1, '#ff00ff'); R(x + 1, 42, 1, 1, '#ff00ff'); R(x - 1, 43, 2, 2, '#ff00ff'); R(x - 2, 45, 1, 1, '#ff00ff'); R(x + 1, 45, 1, 1, '#ff00ff');
  });
  L([558, 46, 569, 50], '#c0c0c0');
  T(571, 56, '11.66', '#c0c0c0');
  L([25, 305, 36, 305], '#c0c0c0');
  L([29, 302, 26, 305, 29, 308], '#c0c0c0');
  T(37, 309, '6.32', '#c0c0c0');
  T(90, 98, '量能理想,明显走强,中线参与，仓位在2/3左右', '#ff00ff');
  T(90, 119, '总势量能理想,2/3仓位,前一轮下跌，是否最佳买点，否则谨慎介入。', '#00ff00');
  T(92, 141, '[ 绿灯 ] 实计交易量增加。MFI促进指数增加。', '#ffffff');

  // lower panes
  [411, 458, 506, 554, 604, 653, 702, 752, 799].forEach(y => R(y === 411 || y === 799 ? 18 : 467, y, y === 411 || y === 799 ? 1227 : 778, 1, LINE));
  [['350.0', 431], ['400.0', 477], ['20.00', 523], ['25.00', 572], ['100.0', 626], ['100.0', 674], ['100.0', 723], ['100.0', 772]].forEach(a => {
    T(1243, a[1] + 5, a[0], RED, 'ax');
    R(1195, a[1], 5, 1, LINE);
  });

  // pane 1 + 2
  const skyW = [467, 452, 477, 452, 487, 438, 505, 432, 520, 437, 530, 442, 545, 437, 572, 443, 645, 447, 663, 447, 678, 447, 698, 445, 718, 451, 735, 448, 758, 447, 785, 447, 808, 443, 828, 448, 853, 453, 880, 445, 910, 447, 945, 444, 985, 449, 1020, 446, 1060, 450, 1095, 447, 1120, 452, 1143, 446];
  const skyO = [467, 447, 482, 443, 498, 447, 518, 448, 542, 451, 565, 447, 598, 447, 625, 448, 662, 447, 682, 447, 702, 454, 718, 447, 748, 443, 785, 443, 808, 447, 830, 453, 858, 450, 900, 452, 940, 447, 990, 452, 1030, 448, 1075, 453, 1110, 450, 1143, 444];
  [0, 47].forEach(dy => {
    L([467, 438 + dy, 1143, 438 + dy], '#00d800', 1, '5 3');
    L([467, 443 + dy, 1143, 443 + dy], '#2d8a6e', 1, '5 3');
    L([467, 453 + dy, 1143, 453 + dy], '#ff00ff', 1, '5 3');
    if (!dy) L([467, 457, 1143, 457], '#d00000', 1, '2 3');
    L(shift(skyW, dy), '#ffffff');
    L(shift(skyO, dy), '#f08030');
    gem(496, 438 + dy); gem(526, 438 + dy);
  });
  [[669, 448], [717, 451], [847, 452], [1137, 443]].forEach(a => up(...a));
  [[702, 447], [1121, 441]].forEach(a => down(...a));
  [[669, 495], [733, 498], [847, 500], [1137, 490]].forEach(a => up(...a));
  [[702, 494], [783, 485], [1121, 488]].forEach(a => down(...a));
  T(469, 424, '天分界: 0.00', '#ffff00'); T(540, 424, '天际: 100.00', '#2d8a6e'); T(613, 424, '天顶: 200.00', '#00ff00');
  T(460, 472, '每天分界: 0.00', '#ffff00'); T(543, 472, '天际: 100.00', '#2d8a6e'); T(616, 472, '天顶: 200.00', '#00ff00');
  out.push('<text x="560" y="449" class="mark" style="font-size:25px">股海网</text><text x="641" y="449" class="mark">Www.Guhai.Com.CN</text>');

  // pane 3 + 4
  const flowM = [467, 541, 492, 534, 508, 537, 525, 537, 542, 542, 572, 541, 605, 542, 642, 547, 662, 542, 685, 532, 702, 545, 732, 540, 748, 528, 782, 527, 798, 537, 815, 537, 832, 547, 848, 547, 865, 540, 900, 530, 935, 528, 970, 540, 1000, 548, 1035, 535, 1070, 532, 1100, 545, 1143, 533];
  const flowG = [467, 541, 508, 537, 545, 540, 572, 542, 605, 542, 642, 545, 662, 543, 685, 539, 712, 539, 732, 541, 782, 528, 825, 538, 832, 541, 862, 545, 905, 537, 945, 530, 985, 542, 1020, 546, 1060, 538, 1100, 540, 1143, 535];
  [0, 48].forEach(dy => {
    L([467, 541 + dy, 1143, 541 + dy], '#ffffff', 1, '4 3');
    L(shift(flowM, dy), '#ff00ff');
    L(shift(flowG, dy), '#00e000');
    [477, 572, 669, 733, 862, 936, 1010, 1085, 1137].forEach(x => up(x, 543 + dy));
    [508, 605, 702, 798, 900, 975, 1050, 1121].forEach(x => down(x, 532 + dy));
  });
  [0, 48].forEach(dy => {
    const x = dy ? 3 : 0, y = 520 + dy;
    T(466 + x, y, '大宗流入: 1145.50', '#ffffff'); T(568 + x, y, '三日净入: 2587.24', '#ffff00'); T(672 + x, y, '三日大宗: 827.64', '#ffffff');
    T(768 + x, y, '五日净入: 2548.67', '#ffff00'); T(873 + x, y, '五日大宗: 949.82', '#ffffff'); T(971 + x, y, '十日净入: -34.39', '#ffff00'); T(1066 + x, y, '十日大宗: 40.42', '#ffffff');
  });

  // pane 5 + 6
  const waveM = [468, 635, 492, 625, 525, 632, 542, 639, 572, 639, 612, 639, 638, 647, 662, 638, 685, 624, 702, 638, 718, 637, 732, 633, 748, 627, 782, 628, 798, 637, 818, 637, 832, 646, 848, 646, 865, 633, 900, 640, 935, 630, 970, 636, 1000, 645, 1035, 628, 1070, 634, 1100, 643, 1143, 632];
  const waveW = [468, 634, 500, 632, 530, 634, 545, 637, 600, 640, 650, 643, 690, 632, 702, 636, 725, 637, 760, 634, 790, 632, 810, 635, 830, 641, 865, 638, 905, 640, 945, 634, 985, 638, 1025, 641, 1060, 634, 1100, 639, 1143, 634];
  const waveY = [468, 636, 500, 634, 530, 634, 548, 636, 580, 638, 640, 642, 665, 637, 700, 634, 730, 636, 790, 634, 820, 637, 860, 640, 900, 638, 945, 635, 985, 639, 1025, 640, 1060, 635, 1100, 637, 1143, 635];
  [0, 49].forEach(dy => {
    L([467, 627 + dy, 1143, 627 + dy], '#c00000', 1, '2 3');
    L([467, 629 + dy, 1143, 629 + dy], '#00d800', 1, '5 3');
    L([467, 637 + dy, 1143, 637 + dy], '#2d8a6e', 1, '5 3');
    L([467, 645 + dy, 1143, 645 + dy], '#f08030', 1, '5 3');
    L(shift(waveY, dy), '#ffff00', 2);
    L(shift(waveW, dy), '#ffffff');
    L(shift(waveM, dy), '#ff00ff');
    [477, 669, 733, 862, 936, 1010, 1085, 1137].forEach(x => up(x, 637 + dy));
    [541, 702, 798, 900, 975, 1050, 1121].forEach(x => down(x, 630 + dy));
  });
  T(472, 617, '0.00', '#f08030');
  T(468, 666, '10.00', '#f08030');

  // pane 7 + 8
  const goldW = [467, 745, 480, 729, 500, 728, 520, 735, 540, 745, 560, 730, 590, 728, 610, 732, 625, 745, 645, 745, 665, 735, 685, 735, 700, 745, 712, 745, 725, 735, 745, 730, 770, 728, 800, 730, 815, 745, 830, 735, 860, 728, 900, 728, 920, 745, 945, 733, 965, 745, 990, 745, 1010, 730, 1040, 730, 1060, 745, 1085, 730, 1110, 735, 1143, 728];
  const goldY = [467, 737, 492, 731, 508, 734, 525, 735, 565, 734, 622, 735, 665, 736, 682, 732, 698, 735, 745, 731, 782, 728, 798, 734, 828, 737, 862, 735, 900, 731, 940, 734, 985, 737, 1025, 732, 1065, 736, 1105, 733, 1143, 735];
  const goldM = [467, 739, 500, 735, 530, 737, 570, 737, 620, 738, 650, 737, 690, 735, 730, 737, 790, 733, 830, 738, 870, 737, 920, 734, 960, 738, 1000, 737, 1050, 735, 1100, 738, 1143, 735];
  const leftW = [19, 795, 35, 780, 60, 778, 90, 786, 110, 790, 130, 778, 160, 792, 180, 786, 210, 779, 240, 779, 265, 790, 280, 795, 300, 777, 330, 795, 360, 777, 390, 782, 425, 795, 450, 778, 467, 793];
  const leftY = [19, 783, 45, 780, 100, 782, 150, 784, 215, 784, 240, 781, 310, 784, 360, 782, 415, 788, 450, 784, 467, 785];
  const leftM = [19, 787, 80, 786, 140, 784, 200, 786, 260, 787, 320, 785, 380, 787, 440, 787, 467, 787];
  L(goldW, '#ffffff');
  L(goldY, '#ffff00', 2);
  L(goldM, '#ff00ff', 1);
  R(467, 724, 676, 2, '#00f000');
  R(467, 728, 676, 1, '#3060d0');
  R(467, 743, 676, 3, '#ff7878');
  R(467, 748, 676, 1, '#d00000');
  [475, 668, 862, 1136].forEach(x => flame(x, 742));
  [477, 525, 557, 669, 718, 733, 782, 862, 925, 1000, 1065, 1136].forEach(x => up(x, 735));
  [509, 541, 605, 702, 767, 798, 880, 960, 1040, 1105].forEach(x => down(x, 732));

  L(leftW.concat(shift(goldW, 48)), '#ffffff');
  L(leftY.concat(shift(goldY, 48)), '#ffff00', 2);
  L(leftM.concat(shift(goldM, 48)), '#ff00ff', 1);
  R(19, 773, 1124, 2, '#00f000');
  R(19, 791, 1124, 4, '#ff7878');
  R(19, 797, 1124, 1, '#d00000');
  [26, 90, 138, 219, 299, 428, 475, 734, 863, 929, 992, 1090, 1137].forEach(x => flame(x, 789));
  [26, 90, 138, 219, 299, 348, 428, 478, 573, 669, 734, 782, 847, 863, 929, 992, 1039, 1090, 1137].forEach(x => up(x, 784));
  [73, 105, 153, 266, 332, 396, 461, 556, 589, 605, 686, 767, 798, 895, 976, 1008, 1057, 1121].forEach(x => down(x, 780));
  [0, 49].forEach(dy => {
    const x = dy ? 3 : 0, y = 716 + dy;
    T(468 + x, y, ': 80.00', '#3060d0'); T(510 + x, y, ': 90.00', '#00e000'); T(551 + x, y, '顶部区域: 0.00', '#00e000'); T(644 + x, y, '底部区域: 0.00', '#00e000'); T(731 + x, y, '低位金叉: 0.00', '#f00000');
  });
  out.push(`<rect x="1196" y="752" width="48" height="47" fill="none" stroke="${LINE}" stroke-width="2"/>`);

  // time axis
  T(25, 812, '2012年', RED);
  [[330, '1'], [653, '2'], [894, '3']].forEach(a => { R(a[0], 800, 1, 15, LINE); T(a[0] + 2, 812, a[1], RED); });
  [410, 491, 573, 712, 772, 833, 975, 1055].forEach(x => R(x, 800, 1, 3, LINE));
  T(1207, 811, '日线', '#c0c0c0');

  document.getElementById('chart').innerHTML = out.join('');
</script>
</body>
</html>
